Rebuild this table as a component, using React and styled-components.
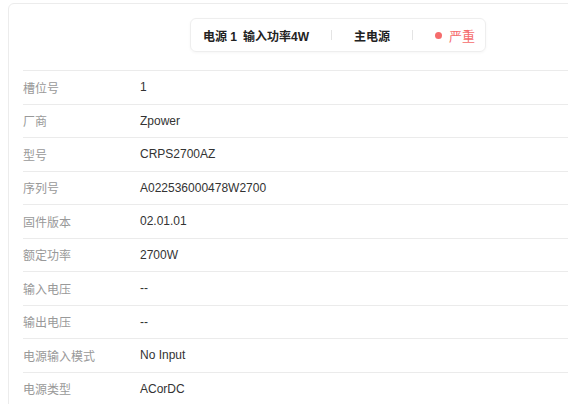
import React from "react";
import styled, { createGlobalStyle } from "styled-components";

const GlobalStyle = createGlobalStyle`
  html, body {
    margin: 0;
    padding: 0;
    background: #fff;
    font-family: "Liberation Sans", "Noto Sans CJK SC", Arial, sans-serif;
  }
`;

const Page = styled.div`
  width: 568px;
  height: 404px;
  overflow: hidden;
  padding: 3px 0 0 8px;
  box-sizing: border-box;
`;

const Card = styled.section`
  width: 640px;
  border: 1px solid #ececec;
  border-radius: 6px;
  background: #fff;
  padding: 14px 0 0 14px;
  box-sizing: border-box;
  min-height: 420px;
`;

const Header = styled.div`
  display: flex;
  padding-left: 167px;
  padding-bottom: 18px;
  border-bottom: 1px solid #ebebeb;
`;

const Pill = styled.div`
  display: flex;
  align-items: center;
  height: 34px;
  padding: 0 10px 0 12px;
  border: 1px solid #eeeeee;
  border-radius: 6px;
  box-shadow: 0 1px 3px rgba(0, 0, 0, 0.04);
  box-sizing: border-box;
`;

const PillText = styled.span`
  font-size: 12px;
  font-weight: bold;
  color: #222;
  white-space: pre;
  margin-right: ${(p) => p.$gap || 0}px;
`;

const Sep = styled.span`
  width: 1px;
  height: 10px;
  background: #e4e4e4;
  margin: 0 22px;
`;

const Status = styled.span`
  display: flex;
  align-items: center;
  gap: 7px;
  font-size: 13px;
  color: #f56c6c;

  &::before {
    content: "";
    width: 7px;
    height: 7px;
    border-radius: 50%;
    background: #f56c6c;
  }
`;

const Row = styled.div`
  display: flex;
  align-items: center;
  height: 33.5px;
  box-sizing: border-box;
  border-bottom: 1px solid #ebebeb;
  font-size: 12px;
`;

const Label = styled.span`
  width: 117px;
  color: #999;
`;

const Value = styled.span`
  color: #333;
`;

const rows = [
  ["槽位号", "1"],
  ["厂商", "Zpower"],
  ["型号", "CRPS2700AZ"],
  ["序列号", "A022536000478W2700"],
  ["固件版本", "02.01.01"],
  ["额定功率", "2700W"],
  ["输入电压", "--"],
  ["输出电压", "--"],
  ["电源输入模式", "No Input"],
  ["电源类型", "ACorDC"],
];

const App = () => {
  return (
    <Page>
      <GlobalStyle />
      <Card>
        <Header>
          <Pill>
            <PillText $gap={6}>电源 1</PillText>
            <PillText>输入功率4W</PillText>
            <Sep />
            <PillText>主电源</PillText>
            <Sep />
            <Status>严重</Status>
          </Pill>
        </Header>
        {rows.map(([k, v]) => (
          <Row key={k}>
            <Label>{k}</Label>
            <Value>{v}</Value>
          </Row>
        ))}
      </Card>
    </Page>
  );
};

export default App;
